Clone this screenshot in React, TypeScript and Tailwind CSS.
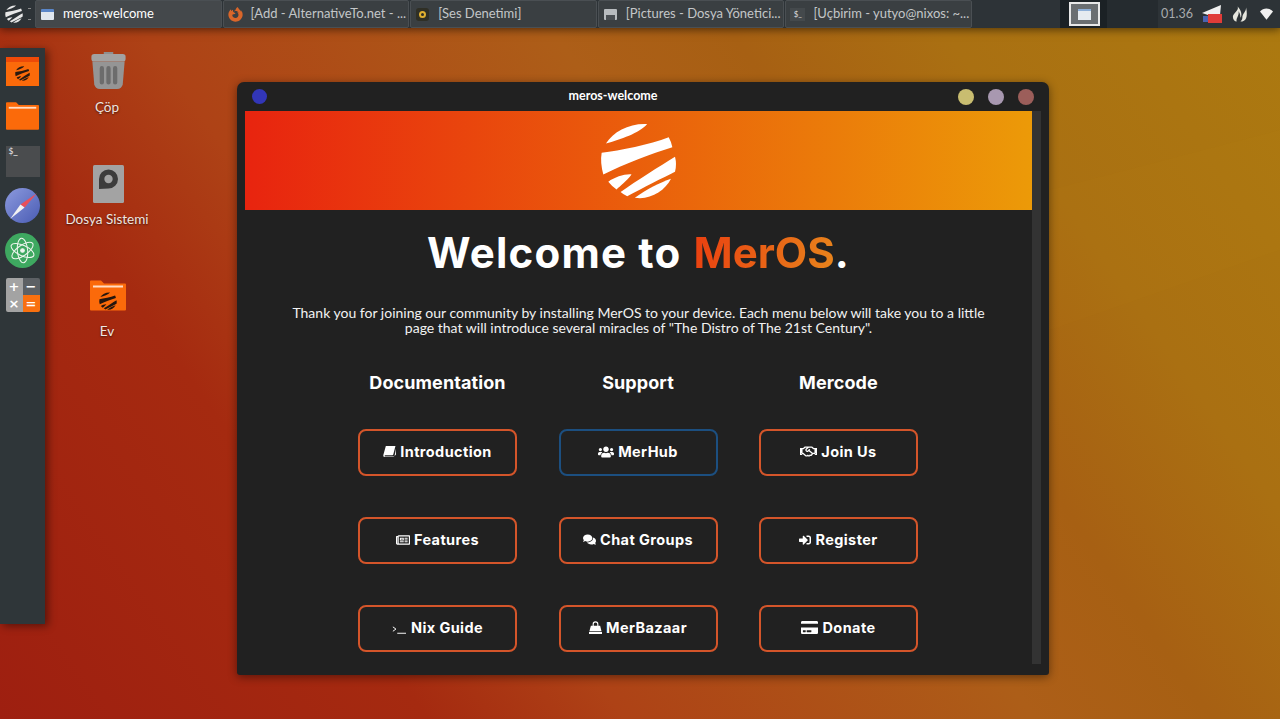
import React from "react";
import {FaUsers, FaRegHandshake, FaRegNewspaper, FaComments, FaSignInAlt, FaCreditCard, FaFirefoxBrowser} from "react-icons/fa";

const MerLogo = ({className, fill}: {className?: string, fill: string}) => (
    <svg viewBox="1090 132 232 232" className={className} fill={fill}>
        <path d="M1108 197C1130 160 1180 135 1232 138C1210 165 1150 185 1108 197Z"/>
        <path d="M1095 225C1150 218 1240 200 1297 178Q1305 192 1308 208C1250 225 1160 260 1100 290Q1090 255 1095 225Z"/>
        <path d="M1115 312C1135 298 1165 288 1185 290C1170 310 1150 325 1140 335Q1125 325 1115 312Z"/>
        <path d="M1152 343C1200 310 1270 265 1316 237Q1322 260 1316 282C1280 300 1220 330 1172 356Q1160 350 1152 343Z"/>
        <path d="M1195 360C1230 335 1270 315 1304 303C1285 340 1240 368 1195 360Z"/>
    </svg>
)

const Folder = ({className}: {className?: string}) => (
    <svg viewBox="0 0 36 30" className={className}>
        <path d="M0 1q0-1 1-1h10l3 3h21q1 0 1 1v25q0 1-1 1H1q-1 0-1-1z" fill="#fb6a0a"/>
        <rect x="3" y="5" width="30" height="2" fill="#ffdcc4"/>
    </svg>
)

const BookIcon = () => (
    <svg viewBox="0 0 14 12" className="w-[13px] h-[11px]" fill="currentColor">
        <path d="M3 0h10.5l-2.4 9.2q-.2.8-1 .8H2.4q-.9 0-.7.8t1 .6h8.8q.8 0 1-.6L14 3v6.5L12.4 11q-.3 1-1.2 1H2q-2 0-1.8-2z"/>
    </svg>
)

const BagIcon = () => (
    <svg viewBox="0 0 14 14" className="w-[13px] h-[13px]">
        <path d="M4.5 6V3.5a2.5 2.5 0 0 1 5 0V6" fill="none" stroke="currentColor" strokeWidth="1.2"/>
        <path d="M2 5h10l1.5 6H.5z" fill="currentColor"/>
        <rect x="0" y="11.8" width="14" height="2.2" fill="currentColor"/>
    </svg>
)

const Terminal = () => (
    <svg viewBox="0 0 16 10" className="w-[14px] h-[9px] mt-[3px] mr-[1px]" fill="none" stroke="currentColor" strokeWidth="1.1">
        <path d="M1 2l3.5 2.5L1 7"/>
        <path d="M6 9.3h10"/>
    </svg>
)

const tasks = [
    {label: "meros-welcome", active: true, icon: <span className="w-[13px] h-[11px] bg-[#dfe6ee] border-t-[3px] border-[#5a86c8] rounded-[1px]"/>},
    {label: "[Add - AlternativeTo.net - ...", icon: <FaFirefoxBrowser className="text-[#d9662a] text-[15px]"/>},
    {label: "[Ses Denetimi]", icon: <span className="w-[13px] h-[13px] rounded-[3px] bg-[#2f2f25] flex items-center justify-center"><span className="w-[7px] h-[7px] rounded-full border-2 border-[#e0b030]"/></span>},
    {label: "[Pictures - Dosya Yönetici...", icon: <span className="w-[13px] h-[11px] bg-[#b8bcbf] rounded-[1px] flex items-end justify-center"><span className="w-[9px] h-[5px] bg-[#4a4f53]"/></span>},
    {label: "[Uçbirim - yutyo@nixos: ~...", icon: <span className="w-[15px] h-[13px] bg-[#44494c] text-[8px] leading-[13px] text-[#ddd] text-center">$_</span>},
]

const columns = [
    {title: "Documentation", buttons: [
        {label: "Introduction", icon: <BookIcon/>},
        {label: "Features", icon: <FaRegNewspaper className="text-[14px]"/>},
        {label: "Nix Guide", icon: <Terminal/>},
    ]},
    {title: "Support", buttons: [
        {label: "MerHub", blue: true, icon: <FaUsers className="text-[16px]"/>},
        {label: "Chat Groups", icon: <FaComments className="text-[13px]"/>},
        {label: "MerBazaar", icon: <BagIcon/>},
    ]},
    {title: "Mercode", buttons: [
        {label: "Join Us", icon: <FaRegHandshake className="text-[17px]"/>},
        {label: "Register", icon: <FaSignInAlt className="text-[12px]"/>},
        {label: "Donate", icon: <FaCreditCard className="text-[17px]"/>},
    ]},
]

const TopBar = () => (
    <div className="relative h-[28px] w-full flex items-stretch bg-[#2d3337] shadow-[0_2px_8px_rgba(0,0,0,0.5)] text-[#c3c6c8] text-[13px]">
        <div className="w-[35px] flex items-center pl-[5px] gap-[5px] shrink-0">
            <MerLogo fill="#e8e8e8" className="w-[18px] h-[18px]"/>
            <span className="w-[3px] h-[12px] border-y border-[#888]"/>
        </div>
        <div className="flex gap-[1px]">
            {tasks.map(task => (
                <div key={task.label}
                     className={`w-[186.6px] flex items-center gap-[8px] pl-[4px] border border-[#4a4f53] rounded-[2px] whitespace-nowrap overflow-hidden ${task.active ? "bg-[#44484b] text-white" : "bg-[#3a3f42]"}`}>
                    <span className="w-[15px] flex justify-center shrink-0">{task.icon}</span>
                    <span>{task.label}</span>
                </div>
            ))}
        </div>
        <div className="flex-1"/>
        <div className="w-[47px] bg-[#1b2125] flex items-center pl-[9px]">
            <div className="w-[31px] h-[24px] shrink-0 border-2 border-[#e8e8e8] bg-[#6a6e71] flex items-center justify-center">
                <span className="w-[13px] h-[11px] bg-[#e6ebf0] border-t-[2px] border-[#8fb0d8]"/>
            </div>
        </div>
        <div className="w-[51px] bg-[#252b2f]"/>
        <div className="w-[122px] flex items-center pl-[3px] text-[12.5px] text-[#a8abad]">
            <span>01.36</span>
            <svg viewBox="0 0 20 18" className="w-[20px] h-[18px] ml-[9px]">
                <path d="M0 8L19 0l-1 10H6z" fill="#f0f0f0"/>
                <rect x="1" y="11" width="5" height="6" fill="#4a62b0"/>
                <rect x="6" y="9" width="14" height="9" fill="#e03c38"/>
            </svg>
            <svg viewBox="0 0 18 18" className="w-[17px] h-[18px] ml-[9px]" fill="#e6e6de">
                <path d="M7 1c2 4-5 7-5 11 0 3 2 5 4 5-1-4 3-6 2-11 2 3 2 5 2 7 2-3 1-8-3-12z"/>
                <path d="M16 2c0 5-4 6-4 11 0 2-1 3-2 4 6 0 8-5 6-15z"/>
            </svg>
            <svg viewBox="0 0 16 14" className="w-[13px] h-[12px] ml-[12px]" fill="#f0f0f0">
                <path d="M0 4c4-5 12-5 16 0L8 14z"/>
            </svg>
        </div>
    </div>
)

const Dock = () => (
    <div className="absolute left-0 top-[48px] w-[45px] h-[576px] bg-[#2f3639] shadow-[3px_2px_8px_rgba(0,0,0,0.45)] flex flex-col items-center pt-[9px]">
        <div className="w-[33px] h-[29px] bg-[#fb6a0a] border-t-[5px] border-[#ee4a08] flex items-center justify-center">
            <MerLogo fill="#2a1a10" className="w-[15px] h-[15px] -mt-[2px]"/>
        </div>
        <Folder className="w-[33px] h-[28px] mt-[16px]"/>
        <div className="w-[34px] h-[31px] mt-[16px] bg-[#4a4c4e] text-[#eee] text-[8px] leading-[12px] pl-[3px] font-['DejaVu_Sans',sans-serif]">$_</div>
        <svg viewBox="0 0 34 34" className="w-[35px] h-[35px] mt-[11px]">
            <defs>
                <linearGradient id="compass" x1="0" y1="0" x2="1" y2="1">
                    <stop offset="0" stopColor="#8c9ade"/>
                    <stop offset="1" stopColor="#4a5cb4"/>
                </linearGradient>
            </defs>
            <circle cx="17" cy="17" r="17" fill="url(#compass)"/>
            <path d="M31 5L15 16l4 3z" fill="#e8505a"/>
            <path d="M5 30L15 16l4 3z" fill="#f2f2f2"/>
        </svg>
        <svg viewBox="0 0 34 34" className="w-[35px] h-[35px] mt-[10px]" fill="none" stroke="#eef5ee" strokeWidth="1">
            <circle cx="17" cy="17" r="17" fill="#3ea860" stroke="none"/>
            <ellipse cx="17" cy="17" rx="12" ry="5" transform="rotate(25 17 17)"/>
            <ellipse cx="17" cy="17" rx="12" ry="5" transform="rotate(-35 17 17)"/>
            <ellipse cx="17" cy="17" rx="12" ry="5" transform="rotate(85 17 17)"/>
            <circle cx="17" cy="17" r="1.8" fill="#eef5ee"/>
        </svg>
        <div className="w-[34px] h-[34px] mt-[10px] grid grid-cols-2 grid-rows-2 text-white text-[13px] leading-[17px] font-bold text-center font-['DejaVu_Sans',sans-serif] rounded-[2px] overflow-hidden">
            <span className="bg-[#a3a3a3]">+</span>
            <span className="bg-[#5c6064]">−</span>
            <span className="bg-[#a3a3a3]">×</span>
            <span className="bg-[#f9700f]">=</span>
        </div>
    </div>
)

const desktopIcons = [
    {label: "Çöp", top: "top-[52px]", icon: (
        <svg viewBox="0 0 36 40" className="w-[35px] h-[38px] ml-[3px]">
            <path d="M13 0h10v3H13z" fill="#8f8f8f"/>
            <rect x="0" y="2" width="36" height="8" rx="3" fill="#a2a2a2"/>
            <path d="M1 10h34l-2 24q-1 5-6 5H9q-5 0-6-5z" fill="#959595"/>
            <path d="M11 17v15M18 17v15M25 17v15" stroke="#6c6c6c" strokeWidth="4.5" strokeLinecap="round"/>
        </svg>
    )},
    {label: "Dosya Sistemi", top: "top-[164px]", icon: (
        <svg viewBox="0 0 31 38" className="w-[31px] h-[38px] mt-[1px] ml-[2px]">
            <rect width="31" height="38" rx="1.5" fill="#a3a3a3"/>
            <path d="M6 24V14a9.5 9.5 0 1 1 9.5 9.5z" fill="#3c3c3c"/>
            <circle cx="15.5" cy="14" r="4.2" fill="#a3a3a3"/>
        </svg>
    )},
    {label: "Ev", top: "top-[276px]", icon: (
        <div className="relative mt-[4px] ml-[1px]">
            <Folder className="w-[36px] h-[31px]"/>
            <MerLogo fill="#24160e" className="absolute left-[9px] top-[12px] w-[18px] h-[18px]"/>
        </div>
    )},
]

export default function App() {
    return (
        <div className="relative w-[1280px] h-[719px] overflow-hidden bg-[linear-gradient(235deg,#ac7a10_0%,#aa7012_20%,#a76013_32%,#ad5e18_42%,#ae4216_65%,#a52a10_76%,#9e1f10_100%)] font-['Lato',sans-serif]">
            <svg className="absolute inset-0 w-full h-full" viewBox="0 0 1280 719">
                <path d="M1050 190L1280 130V250L1050 330z" fill="#c89a20" opacity="0.04"/>
            </svg>
            <TopBar/>
            <Dock/>
            {desktopIcons.map(item => (
                <div key={item.label} className={`absolute left-[57px] w-[100px] h-[72px] flex flex-col items-center ${item.top} text-[#f0e6e0] text-[13.5px] [text-shadow:0_1px_2px_rgba(0,0,0,0.6)]`}>
                    <div className="h-[40px] flex items-start">{item.icon}</div>
                    <span className="mt-[5px] whitespace-nowrap">{item.label}</span>
                </div>
            ))}

            <div className="absolute left-[237px] top-[82px] w-[812px] h-[593px] bg-[#212121] rounded-[7px] rounded-b-[3px] shadow-[0_2px_10px_rgba(0,0,0,0.45)] flex flex-col">
                <div className="h-[29px] flex items-center shrink-0 px-[15px]">
                    <span className="w-[15px] h-[15px] rounded-full bg-[#3236b8]"/>
                    <span className="flex-1 text-center text-white text-[12.5px] font-bold ml-[1px]">meros-welcome</span>
                    <div className="flex gap-[14px]">
                        <span className="w-[16px] h-[16px] rounded-full bg-[#c9bd70]"/>
                        <span className="w-[16px] h-[16px] rounded-full bg-[#a898b0]"/>
                        <span className="w-[16px] h-[16px] rounded-full bg-[#9c5e5a]"/>
                    </div>
                </div>
                <div className="flex pl-[8px] h-[553px]">
                    <div className="w-[787px] flex flex-col items-center">
                        <div className="w-full h-[99px] shrink-0 flex items-center justify-center bg-[linear-gradient(90deg,#e8240f,#ec9a08)]">
                            <MerLogo fill="#ffffff" className="w-[77px] h-[77px]"/>
                        </div>
                        <h1 className="mt-[16px] text-[42px] leading-[54px] font-bold text-white tracking-[1.2px] font-['Inter',sans-serif]">
                            Welcome to <span className="ml-[1px] tracking-[0px] bg-[linear-gradient(100deg,#ea3f10,#e8851c)] bg-clip-text text-transparent">MerOS</span>.
                        </h1>
                        <p className="mt-[25px] w-[704px] text-center text-[14px] leading-[15px] text-[#f2f2f2]">
                            Thank you for joining our community by installing MerOS to your device. Each menu below will take you to a little page that will introduce several miracles of "The Distro of The 21st Century".
                        </p>
                        <div className="mt-[36px] pr-[1px] flex gap-[41.5px] font-['Inter',sans-serif]">
                            {columns.map(column => (
                                <div key={column.title} className="w-[159px] flex flex-col">
                                    <h2 className="text-center text-white text-[18px] leading-[24px] font-bold tracking-[0.1px]">{column.title}</h2>
                                    <div className="mt-[34px] flex flex-col gap-[41px]">
                                        {column.buttons.map(button => (
                                            <button key={button.label}
                                                    className={`h-[47px] pb-[2px] rounded-[8px] border-2 flex items-center justify-center gap-[4px] text-white text-[14.5px] font-bold tracking-[0.4px] ${"blue" in button && button.blue ? "border-[#1c4f80]" : "border-[#d4552a]"}`}>
                                                {button.icon}
                                                {button.label}
                                            </button>
                                        ))}
                                    </div>
                                </div>
                            ))}
                        </div>
                    </div>
                    <div className="w-[9px] h-full bg-[#333333]"/>
                </div>
            </div>
        </div>
    );
}
